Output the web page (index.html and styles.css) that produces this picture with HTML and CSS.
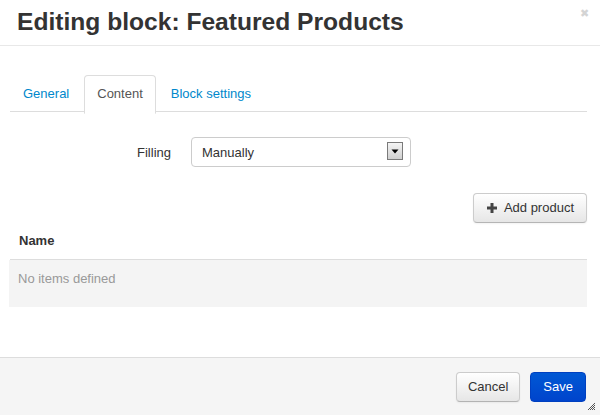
FILE: index.html
```html
<!DOCTYPE html>
<html>
<head>
<meta charset="utf-8">
<link rel="stylesheet" href="styles.css">
</head>
<body>
<div class="modal">
  <div class="modal-header">
    <h3 class="title">Editing block: Featured Products</h3>
    <span class="close">&#x2716;</span>
  </div>
  <div class="modal-body">
    <ul class="tabs">
      <li class="tab"><a>General</a></li>
      <li class="tab active"><a>Content</a></li>
      <li class="tab"><a>Block settings</a></li>
    </ul>
    <div class="form-row">
      <label class="label">Filling</label>
      <div class="select-wrap">
        <span class="select-text">Manually</span>
        <span class="select-arrow"><svg width="8" height="5" viewBox="0 0 8 5"><path d="M0.5 0.5h7L4 4.5z" fill="#000"/></svg></span>
      </div>
    </div>
    <div class="toolbar">
      <button class="btn btn-add"><svg class="plus" width="10" height="10" viewBox="0 0 10 10"><path d="M3.5 0h3v3.5H10v3H6.5V10h-3V6.5H0v-3h3.5z" fill="#444"/></svg>Add product</button>
    </div>
    <div class="table">
      <div class="thead">Name</div>
      <div class="empty">No items defined</div>
    </div>
  </div>
  <div class="modal-footer">
    <button class="btn btn-cancel">Cancel</button>
    <button class="btn btn-primary">Save</button>
    <svg class="grip" width="9" height="9" viewBox="0 0 9 9"><path d="M8 1L1 8M8 3L3 8M8 5L5 8M8 7L7 8" stroke="#555" stroke-width="1"/></svg>
  </div>
</div>
</body>
</html>
```

FILE: styles.css
```css
* { box-sizing: border-box; }
html, body { margin: 0; padding: 0; }
body {
  font-family: "Liberation Sans", Arial, sans-serif;
  font-size: 13px;
  color: #333;
  background: #fff;
  width: 600px;
  height: 415px;
  overflow: hidden;
}
.modal {
  position: relative;
  height: 415px;
  display: flex;
  flex-direction: column;
}
.modal-header {
  height: 46px;
  border-bottom: 1px solid #e8e8e8;
  padding: 7px 0 0 17px;
}
.title {
  margin: 0;
  font-size: 24.6px;
  line-height: 30px;
  font-weight: bold;
  color: #333;
}
.close {
  position: absolute;
  top: 7px;
  right: 11px;
  font-size: 11px;
  color: #d4d4d4;
}
.modal-body {
  flex: 1;
  padding: 29px 13px 0 10px;
}
.tabs {
  list-style: none;
  margin: 0;
  padding: 0;
  display: flex;
  border-bottom: 1px solid #ddd;
  height: 37px;
}
.tab {
  margin-right: 2px;
  margin-bottom: -1px;
}
.tab a {
  display: block;
  padding: 8px 12px;
  line-height: 20px;
  border: 1px solid transparent;
  border-radius: 4px 4px 0 0;
  color: #0088cc;
}
.tab.active a {
  color: #555;
  background: #fff;
  border-color: #ddd #ddd transparent;
  padding: 8px 12px 9px;
}
.form-row {
  display: flex;
  align-items: center;
  margin-top: 25px;
  height: 30px;
}
.label {
  width: 181px;
  text-align: right;
  padding-right: 20px;
  color: #333;
}
.select-wrap {
  position: relative;
  width: 220px;
  height: 30px;
  border: 1px solid #ccc;
  border-radius: 4px;
  background: #fff;
  display: flex;
  align-items: center;
  padding-left: 10px;
}
.select-text { color: #333; }
.select-arrow {
  position: absolute;
  top: 4px;
  right: 7px;
  width: 16px;
  height: 18px;
  border: 1px solid #7a7a7a;
  background: linear-gradient(#f4f4f4, #cfcfcf);
  display: flex;
  align-items: center;
  justify-content: center;
}
.toolbar {
  display: flex;
  justify-content: flex-end;
  margin-top: 26px;
}
.btn {
  font-family: "Liberation Sans", Arial, sans-serif;
  font-size: 13px;
  line-height: 20px;
  border-radius: 4px;
  cursor: pointer;
  display: inline-flex;
  align-items: center;
}
.btn-add {
  height: 30px;
  padding: 4px 12px 4px 13px;
  color: #333;
  border: 1px solid #ccc;
  border-bottom-color: #b5b5b5;
  background: linear-gradient(#ffffff, #e6e6e6);
  box-shadow: inset 0 1px 0 rgba(255,255,255,.2), 0 1px 2px rgba(0,0,0,.05);
}
.plus { margin-right: 7px; }
.table {
  margin-top: 0;
}
.thead {
  font-weight: bold;
  padding: 7px 9px 8px;
  line-height: 21px;
  border-bottom: 1px solid #ddd;
  color: #333;
}
.empty {
  background: #f4f4f4;
  color: #999;
  padding: 9px 9px 18px;
  line-height: 20px;
  margin-left: -1px;
}
.modal-footer {
  position: relative;
  height: 58px;
  border-top: 1px solid #ddd;
  background: #f5f5f5;
  display: flex;
  justify-content: flex-end;
  align-items: flex-start;
  padding: 14px 14px 0 0;
  gap: 10px;
}
.btn-cancel {
  height: 30px;
  padding: 4px 11px;
  color: #333;
  border: 1px solid #ccc;
  border-bottom-color: #b3b3b3;
  background: linear-gradient(#ffffff, #e6e6e6);
  box-shadow: 0 1px 2px rgba(0,0,0,.05);
}
.btn-primary {
  height: 30px;
  padding: 4px 12px;
  color: #fff;
  border: 1px solid #0040c0;
  background: linear-gradient(#0058d4, #0044cc);
}
.grip {
  position: absolute;
  right: 4px;
  bottom: 4px;
}
```
